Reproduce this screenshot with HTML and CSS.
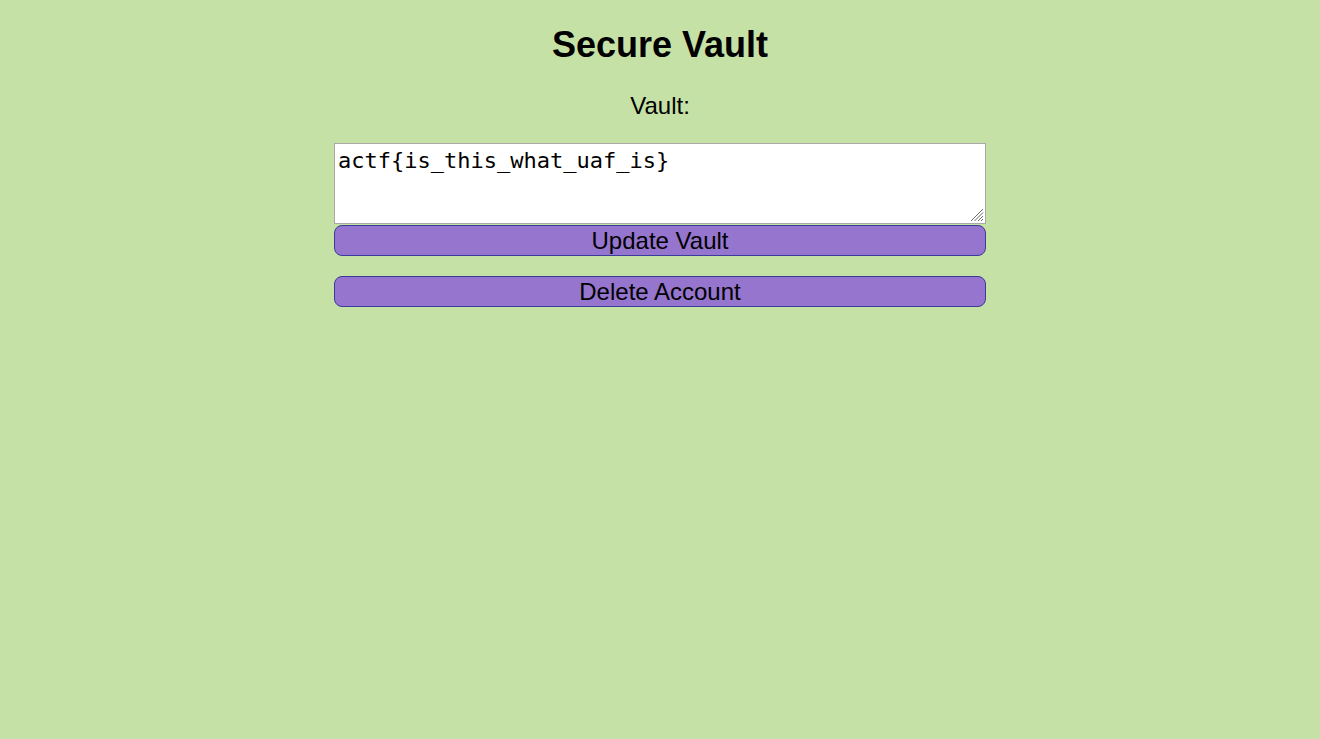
FILE: index.html
```html
<!DOCTYPE html>
<html>
<head>
<meta charset="utf-8">
<title>Secure Vault</title>
<link rel="stylesheet" href="styles.css">
</head>
<body>
<main class="page">
  <h1 class="title">Secure Vault</h1>
  <form class="vault-form">
    <label class="label" for="vault">Vault:</label>
    <div class="vault-wrap">
      <textarea id="vault" class="vault">actf{is_this_what_uaf_is}</textarea>
      <svg class="grip" width="14" height="14" viewBox="0 0 14 14" aria-hidden="true">
        <path d="M13 1 L1 13 M13 4.5 L4.5 13 M13 8 L8 13 M13 11 L11 13" stroke="#6b6b6b" stroke-width="1" fill="none"/>
      </svg>
    </div>
    <button type="button" class="btn">Update Vault</button>
  </form>
  <form class="delete-form">
    <button type="button" class="btn">Delete Account</button>
  </form>
</main>
</body>
</html>
```
FILE: styles.css
```css
html, body {
  margin: 0;
  padding: 0;
  background: #c5e1a5;
  font-family: "Liberation Sans", Arial, sans-serif;
  color: #000;
}

.page {
  display: flex;
  flex-direction: column;
  align-items: center;
}

.title {
  font-size: 36px;
  font-weight: bold;
  line-height: 40px;
  margin: 25px 0 0 0;
}

.vault-form {
  display: flex;
  flex-direction: column;
  align-items: center;
  width: 652px;
}

.label {
  font-size: 24px;
  line-height: 27px;
  margin-top: 27px;
}

.vault-wrap {
  position: relative;
  width: 652px;
  height: 81px;
  margin-top: 24px;
}

.vault {
  box-sizing: border-box;
  width: 652px;
  height: 81px;
  margin: 0;
  padding: 4px 3px 2px 3px;
  border: 1px solid #a9a9a9;
  background: #fff;
  font-family: "DejaVu Sans Mono", "Liberation Mono", monospace;
  font-size: 22px;
  line-height: 26px;
  color: #000;
  resize: none;
  display: block;
}

.grip {
  position: absolute;
  right: 2px;
  bottom: 2px;
}

.btn {
  box-sizing: border-box;
  width: 652px;
  height: 31px;
  margin: 1px 0 0 0;
  padding: 0;
  border: 1px solid #3b3b9b;
  border-radius: 8px;
  background: #9575cd;
  font-family: "Liberation Sans", Arial, sans-serif;
  font-size: 24px;
  line-height: 29px;
  color: #000;
  display: block;
}

.delete-form {
  margin-top: 19px;
}
```
